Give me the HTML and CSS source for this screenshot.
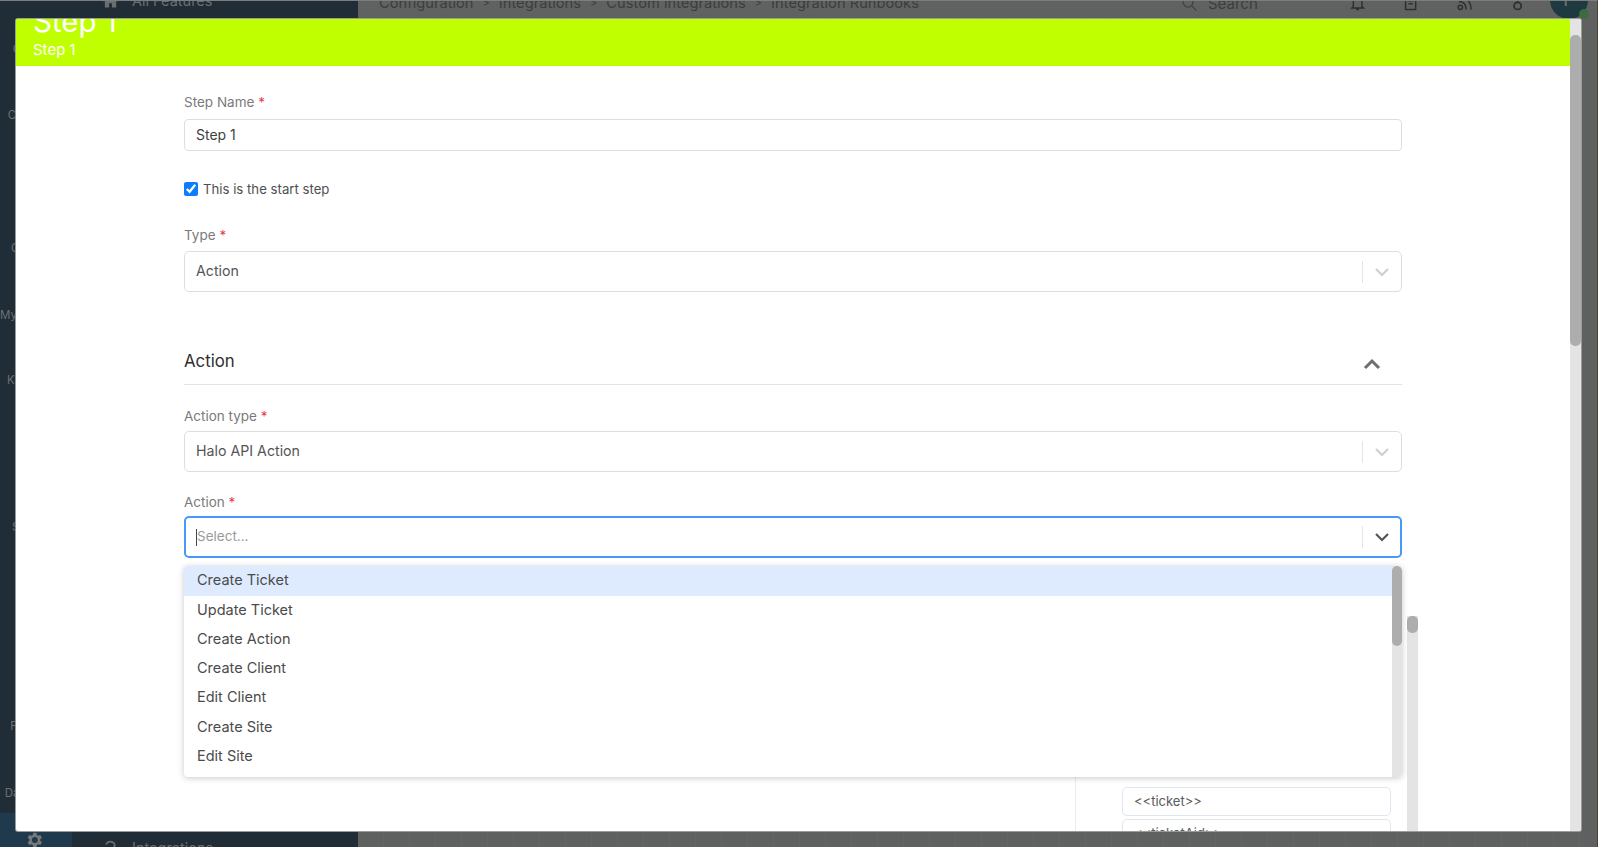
FILE: index.html
```html
<!DOCTYPE html>
<html lang="en">
<head>
<meta charset="utf-8">
<title>Step 1</title>
<link rel="stylesheet" href="styles.css">
</head>
<body>
<div class="page">
  <nav class="rail">
    <span class="rail-item">Calendar</span>
    <span class="rail-item">Customers</span>
    <span class="rail-item">Contracts</span>
    <span class="rail-item">My Approvals</span>
    <span class="rail-item">Knowledge</span>
    <span class="rail-item">Suppliers</span>
    <span class="rail-item">Financials</span>
    <span class="rail-item">Dashboards</span>
    <div class="rail-active">
      <svg class="gear" viewBox="0 0 24 24" width="20" height="20"><path fill="#77797a" d="M19.4 13a7.5 7.5 0 0 0 0-2l2.1-1.6-2-3.4-2.5 1a7.500 7.500 0 0 0-1.700-1L15 3.300h-4L10.600 6a7.500 7.500 0 0 0-1.700 1l-2.500-1-2 3.400L6.500 11a7.500 7.500 0 0 0 0 2l-2.100 1.600 2 3.400 2.500-1a7.500 7.500 0 0 0 1.700 1l.4 2.700h4l.4-2.700a7.500 7.500 0 0 0 1.700-1l2.500 1 2-3.400zM13 15.500a3.500 3.500 0 1 1 0-7 3.500 3.500 0 0 1 0 7z"/></svg>
    </div>
  </nav>
  <nav class="subnav">
    <div class="subnav-item subnav-top">
      <svg viewBox="0 0 24 24" width="17" height="17"><path fill="#6a6e70" d="M12 3 1 13h3v9h6v-6h4v6h6v-9h3z"/></svg>
      <span>All Features</span>
    </div>
    <div class="subnav-item subnav-bottom">
      <svg viewBox="0 0 24 24" width="17" height="17"><path fill="none" stroke="#6a6e70" stroke-width="2.500" d="M6 8a6 5 0 1 1 9 5l-3 3v2M12 21v2"/></svg>
      <span>Integrations</span>
    </div>
  </nav>
  <main class="main">
    <header class="topbar">
      <div class="crumbs">
        <span>Configuration</span><span class="sep">&gt;</span>
        <span>Integrations</span><span class="sep">&gt;</span>
        <span>Custom integrations</span><span class="sep">&gt;</span>
        <span>Integration Runbooks</span>
      </div>
      <div class="search">
        <svg viewBox="0 0 24 24" width="17" height="17"><circle cx="10" cy="10" r="7" fill="none" stroke="#404242" stroke-width="1.800"/><path d="m15 15 7 7" stroke="#404242" stroke-width="1.800"/></svg>
        <span>Search</span>
      </div>
      <div class="tools">
        <svg viewBox="0 0 24 24" width="18" height="18"><path fill="none" stroke="#2e3030" stroke-width="2" d="M6 17V11a6 6 0 0 1 12 0v6l2 2H4zM10 21h4"/></svg>
        <svg viewBox="0 0 24 24" width="18" height="18"><path fill="none" stroke="#2e3030" stroke-width="2" d="M5 4h14v17H5zM9 9h6M9 13h6"/></svg>
        <svg viewBox="0 0 24 24" width="18" height="18"><circle cx="6" cy="18" r="3" fill="none" stroke="#2e3030" stroke-width="2"/><path fill="none" stroke="#2e3030" stroke-width="2" d="M4 10c6 0 10 4 10 11M4 3c10 0 17 7 17 18"/></svg>
        <svg viewBox="0 0 24 24" width="18" height="18"><circle cx="12" cy="16" r="5" fill="none" stroke="#2e3030" stroke-width="2.500"/><path stroke="#2e3030" stroke-width="2.500" d="M12 11V0"/></svg>
      </div>
      <div class="avatar"><span>P</span><i class="avatar-dot"></i></div>
    </header>
  </main>
</div>

<section class="modal">
  <div class="modal-content">
    <header class="modal-head">
      <h1>Step 1</h1>
      <p>Step 1</p>
    </header>
    <form class="form">
      <label class="field-label">Step Name <b>*</b></label>
      <div class="text-input">Step 1</div>

      <label class="check-row"><input type="checkbox" checked> This is the start step</label>

      <label class="field-label label-type">Type <b>*</b></label>
      <div class="select">
        <span class="select-value">Action</span>
        <i class="select-sep"></i>
        <svg class="select-chev" viewBox="0 0 16 16" width="16" height="16"><path d="m2 5 6 6 6-6" fill="none" stroke="#cfcfcf" stroke-width="2.200"/></svg>
      </div>

      <div class="section-head">
        <h2>Action</h2>
        <svg class="section-chev" viewBox="0 0 18 12" width="18" height="12"><path d="m2 10 7-7 7 7" fill="none" stroke="#6f6f6f" stroke-width="3"/></svg>
      </div>

      <label class="field-label label-sub">Action type <b>*</b></label>
      <div class="select">
        <span class="select-value">Halo API Action</span>
        <i class="select-sep"></i>
        <svg class="select-chev" viewBox="0 0 16 16" width="16" height="16"><path d="m2 5 6 6 6-6" fill="none" stroke="#cfcfcf" stroke-width="2.200"/></svg>
      </div>

      <label class="field-label label-action">Action <b>*</b></label>
      <div class="select-wrap">
        <div class="select select-focus">
          <i class="caret"></i>
          <span class="select-placeholder">Select...</span>
          <i class="select-sep"></i>
          <svg class="select-chev" viewBox="0 0 16 16" width="16" height="16"><path d="m2 5 6 6 6-6" fill="none" stroke="#555" stroke-width="2.200"/></svg>
        </div>
        <div class="menu">
          <ul class="menu-list">
            <li class="menu-item menu-item-active">Create Ticket</li>
            <li class="menu-item">Update Ticket</li>
            <li class="menu-item">Create Action</li>
            <li class="menu-item">Create Client</li>
            <li class="menu-item">Edit Client</li>
            <li class="menu-item">Create Site</li>
            <li class="menu-item">Edit Site</li>
          </ul>
          <div class="menu-scroll"><i></i></div>
        </div>
      </div>

      <div class="lower">
        <div class="lower-left"></div>
        <div class="chips">
          <div class="chip">&lt;&lt;ticket&gt;&gt;</div>
          <div class="chip">&lt;&lt;ticketAid&gt;&gt;</div>
        </div>
        <div class="lower-scroll"><i></i></div>
      </div>
    </form>
  </div>
  <div class="modal-scroll"><i></i></div>
</section>
</body>
</html>
```
FILE: styles.css
```css
* { box-sizing: border-box; }
html, body { margin: 0; height: 847px; overflow: hidden; }
body { font-family: Inter, "Open Sans", sans-serif; background: #5f6060; }

.page { display: flex; height: 847px; border-top: 1px solid #7b7d7e; border-right: 1px solid #4b4238; overflow: hidden; }

.rail {
  width: 72px; flex: none; background: #202c36;
  display: grid; padding-top: 39px;
  grid-template-rows: 66px 133px 67px 65px 147px 199px 67px 29px 35px;
}
.rail-item { font-size: 11.500px; line-height: 18px; text-align: center; color: #6c7175; white-space: nowrap; display: flex; justify-content: center; }
.rail-active { background: #1f394d; display: flex; justify-content: center; padding: 15px 7px 0 0; }
.gear { margin-top: 2px; }

.subnav {
  width: 286px; flex: none; background: #202c36;
  display: flex; flex-direction: column; justify-content: space-between;
}
.subnav-item { display: flex; align-items: center; gap: 13px; height: 20px; padding-left: 30px; font-size: 14.500px; color: #6a6e70; }
.subnav-top { margin-top: -11px; }
.subnav-bottom { margin-bottom: -10px; }

.main {
  flex: 1; min-width: 0;
  background: repeating-linear-gradient(90deg, #5f6060 0 25px, #656565 25px 26px);
}
.topbar { display: flex; align-items: center; height: 24px; margin-top: -10px; background: #606261; position: relative; padding-left: 21px; }
.crumbs { display: flex; gap: 9px; width: 802px; flex: none; font-size: 14.700px; color: #3c3d3d; white-space: nowrap; align-items: center; }
.sep { font-size: 11px; }
.search { display: flex; align-items: center; gap: 10px; width: 168px; flex: none; font-size: 15px; color: #3c3d3d; }
.tools { display: flex; gap: 36px; width: 177px; flex: none; }
.avatar {
  position: absolute; left: 1192px; top: -10px; width: 38px; height: 38px; border-radius: 50%;
  background: #1e3a40; color: #6e7272; font-size: 18px; text-align: center; line-height: 38px;
}
.avatar-dot { position: absolute; right: -1px; bottom: 0; width: 10px; height: 10px; border-radius: 50%; background: #3d6a3e; }

.modal {
  position: absolute; left: 16px; top: 19px; width: 1565px; height: 812px;
  display: flex; background: #fff; border-radius: 2px; overflow: hidden;
  box-shadow: 0 0 0 1px #9a9c9c;
}
.modal-content { flex: 1; min-width: 0; overflow: hidden; }
.modal-head { height: 47px; padding-left: 17px; background: #bfff00; color: #fff; overflow: hidden; }
.modal-head h1 { margin: -16px 0 0; font-size: 29.500px; font-weight: 400; line-height: 36px; }
.modal-head p { margin: 1px 0 0; font-size: 15px; line-height: 20px; }

.form { display: block; width: 1218px; margin-left: 168px; padding-top: 26px; }
.field-label { display: block; height: 20px; margin-bottom: 7px; font-size: 13.500px; line-height: 21px; color: #7a7a7a; }
.field-label b { color: #e5414b; font-weight: 400; }
.text-input { height: 32px; border: 1px solid #dedede; border-radius: 4px; padding-left: 11px; font-size: 14px; line-height: 30px; color: #3f3f3f; }
.check-row { display: flex; align-items: center; gap: 5px; height: 22px; margin-top: 27px; font-size: 13.200px; color: #4f4f4f; }
.check-row input { width: 14px; height: 14px; margin: 0; accent-color: #0d7dfb; }
.label-type { margin-top: 25px; margin-bottom: 6px; }
.label-sub { margin-top: 21px; margin-bottom: 5px; }
.label-action { margin-top: 20px; margin-bottom: 4px; }

.select { position: relative; display: flex; align-items: center; height: 41px; border: 1px solid #dedede; border-radius: 5px; padding-left: 11px; font-size: 14.200px; color: #555; }
.select-value { flex: 1; padding-bottom: 2px; }
.select-placeholder { flex: 1; color: #9a9a9a; font-size: 13.500px; padding-bottom: 2px; }
.select-sep { width: 1px; height: 22px; background: #e5e5e5; margin-right: 11px; }
.select-chev { margin-right: 11px; flex: none; }
.select-focus { height: 42px; border: 2px solid #4a98f5; padding-left: 10px; }
.select-focus .select-sep { margin-right: 11px; }
.select-focus .select-chev { margin-right: 10px; }
.caret { width: 1px; height: 17px; background: #444; }

.section-head { display: flex; align-items: center; justify-content: space-between; height: 44px; margin-top: 49px; padding: 0 21px 4px 0; border-bottom: 1px solid #e3e3e3; }
.section-head h2 { margin: 0; font-size: 16.800px; font-weight: 400; color: #2e2e2e; }
.section-chev { margin-top: 6px; }

.select-wrap { position: relative; }
.menu {
  position: absolute; z-index: 2; left: 0; right: 0; top: 50px; height: 211px;
  display: flex; background: #fff; border-radius: 4px; overflow: hidden;
  box-shadow: 0 1px 6px rgba(0, 0, 0, .22);
}
.menu-list { flex: 1; margin: 0; padding: 0; list-style: none; }
.menu-item { height: 29px; padding-left: 13px; font-size: 14.500px; line-height: 28px; color: #4b4b4b; }
.menu-item:nth-child(odd) { height: 29.500px; }
.menu-item-active { height: 30px; background: #deebff; }
.menu-scroll { width: 10px; background: #e4e4e4; }
.menu-scroll i { display: block; height: 80px; background: #adadad; border-radius: 5px; }

.lower { display: flex; width: 1234px; height: 240px; margin-top: 58px; }
.lower-left { width: 892px; flex: none; border-right: 1px solid #ececec; }
.chips { width: 269px; flex: none; margin-left: 46px; padding-top: 171px; }
.chip { height: 29px; margin-bottom: 3px; border: 1px solid #dfe6ee; border-radius: 5px; padding-left: 11px; font-size: 13px; line-height: 27px; color: #5a5a5a; }
.lower-scroll { width: 11px; flex: none; margin-left: 16px; background: #e4e4e4; }
.lower-scroll i { display: block; height: 17px; background: #adadad; border-radius: 5px; }

.modal-scroll { width: 11px; flex: none; background: #e4e4e4; }
.modal-scroll i { display: block; height: 311px; margin-top: 16px; background: #adadad; border-radius: 5px; }
```
